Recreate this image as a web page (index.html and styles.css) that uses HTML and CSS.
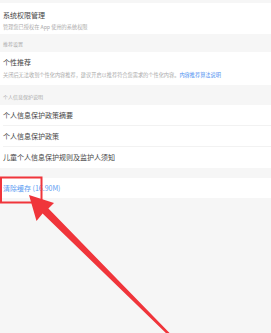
FILE: index.html
```html
<!DOCTYPE html>
<html lang="zh-CN">
<head>
    <meta charset="UTF-8">
    <meta name="viewport" content="width=device-width, initial-scale=1.0">
    <title>隐私设置</title>
    <link rel="stylesheet" href="styles.css">
</head>
<body>
    <div class="page">
        <div class="group-title first"></div>

        <div class="item perm">
            <div class="item-title">系统权限管理</div>
            <div class="item-desc">管理您已授权在 App 使用的系统权限</div>
        </div>

        <div class="group-title">推荐设置</div>

        <div class="item recommend">
            <div class="item-title">个性推荐</div>
            <div class="item-desc">关闭后无法收到个性化内容推荐，建议开启以推荐符合您需求的个性化内容。<span class="link">内容推荐算法说明</span></div>
        </div>

        <div class="group-title tall">个人信息保护说明</div>

        <div class="list">
            <div class="row">个人信息保护政策摘要</div>
            <div class="row">个人信息保护政策</div>
            <div class="row">儿童个人信息保护规则及监护人须知</div>
        </div>

        <div class="list spaced">
            <div class="row link-row">清除缓存 (16.90M)</div>
        </div>
    </div>

    <!-- annotation drawn over the screenshot -->
    <svg class="callout" width="271" height="333" viewBox="0 0 271 333">
        <rect x="1" y="177.5" width="40.5" height="25" fill="none" stroke="#f0353b" stroke-width="2"/>
        <polygon fill="#f0353b" points="29,195 54,203 48.4,208.4 171,334.5 169,336 42.6,213.6 36.5,221"/>
    </svg>
</body>
</html>
```

FILE: styles.css
```css
* { margin: 0; padding: 0; box-sizing: border-box; }
body {
    font-family: "Noto Sans CJK SC", "Noto Sans", sans-serif;
    background-color: #f6f6f6;
    color: #444;
    width: 271px;
    height: 333px;
    overflow: hidden;
    position: relative;
}
.page {
    margin-top: -14px;
}
.group-title {
    height: 18px;
    padding: 6px 3px 0;
    font-size: 5px;
    line-height: 8px;
    color: #aaa;
}
.group-title.first {
    height: 17px;
}
.group-title.tall {
    height: 20px;
    padding-top: 8px;
}
.item {
    background: #fff;
    padding: 0 3px;
}
.item-title {
    font-size: 7px;
    line-height: 10px;
    color: #444;
}
.item-desc {
    font-size: 5.2px;
    line-height: 8px;
    color: #aaa;
    white-space: nowrap;
}
.perm {
    height: 31px;
    padding-top: 7px;
}
.perm .item-desc {
    margin-top: 3px;
}
.recommend {
    height: 33px;
    padding-top: 5px;
}
.recommend .item-desc {
    margin-top: 4px;
}
.link {
    color: #4a8ef0;
}
.list {
    background: #fff;
    padding-left: 3px;
}
.list.spaced {
    margin-top: 10px;
}
.row {
    height: 21px;
    line-height: 21px;
    font-size: 7px;
    color: #444;
    border-bottom: 1px solid #f2f2f2;
}
.row:last-child {
    border-bottom: none;
}
.link-row {
    height: 20px;
    line-height: 20px;
    color: #5b9cf2;
}
.callout {
    position: absolute;
    left: 0;
    top: 0;
}
```
